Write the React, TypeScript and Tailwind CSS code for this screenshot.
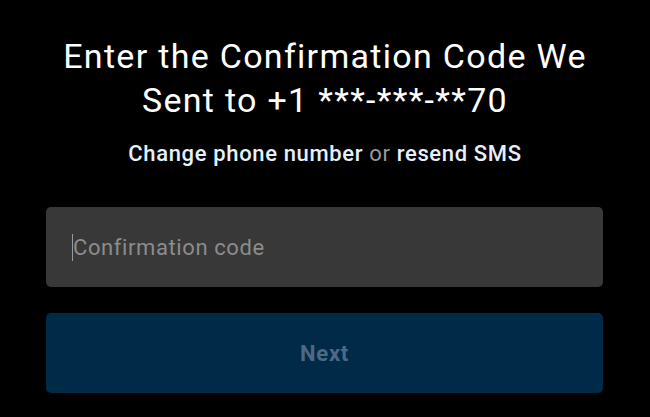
import React from "react";

export default function App() {
  return (
    <div
      className="w-[650px] h-[417px] bg-black flex flex-col items-center"
      style={{ fontFamily: "Roboto, 'Noto Sans', sans-serif" }}
    >
      <h1 className="mt-[34px] text-[34px] leading-[44px] tracking-[1.3px] text-white text-center font-normal">
        Enter the Confirmation Code We
        <br />
        Sent to +1 ***-***-**70
      </h1>
      <p className="mt-[18px] text-[22px] leading-[28px] tracking-[0.65px] font-medium text-[#e6f0fa]">
        Change phone number <span className="font-normal text-[#9a9a9a]">or</span> resend SMS
      </p>
      <div className="mt-[39px] w-full pl-[46px] pr-[47px] flex flex-col gap-[26px]">
        <div className="h-[80px] rounded-[5px] bg-[#383838] flex items-center pl-[26px]">
          <span className="w-[1px] h-[27px] bg-[#9a9a9a]" />
          <span className="text-[22px] tracking-[0.6px] text-[#8c8c8c]">Confirmation code</span>
        </div>
        <div className="h-[80px] rounded-[5px] bg-[#002a47] flex items-center justify-center">
          <span className="text-[22px] tracking-[0.8px] font-bold text-[#4d6984]">Next</span>
        </div>
      </div>
    </div>
  );
}
